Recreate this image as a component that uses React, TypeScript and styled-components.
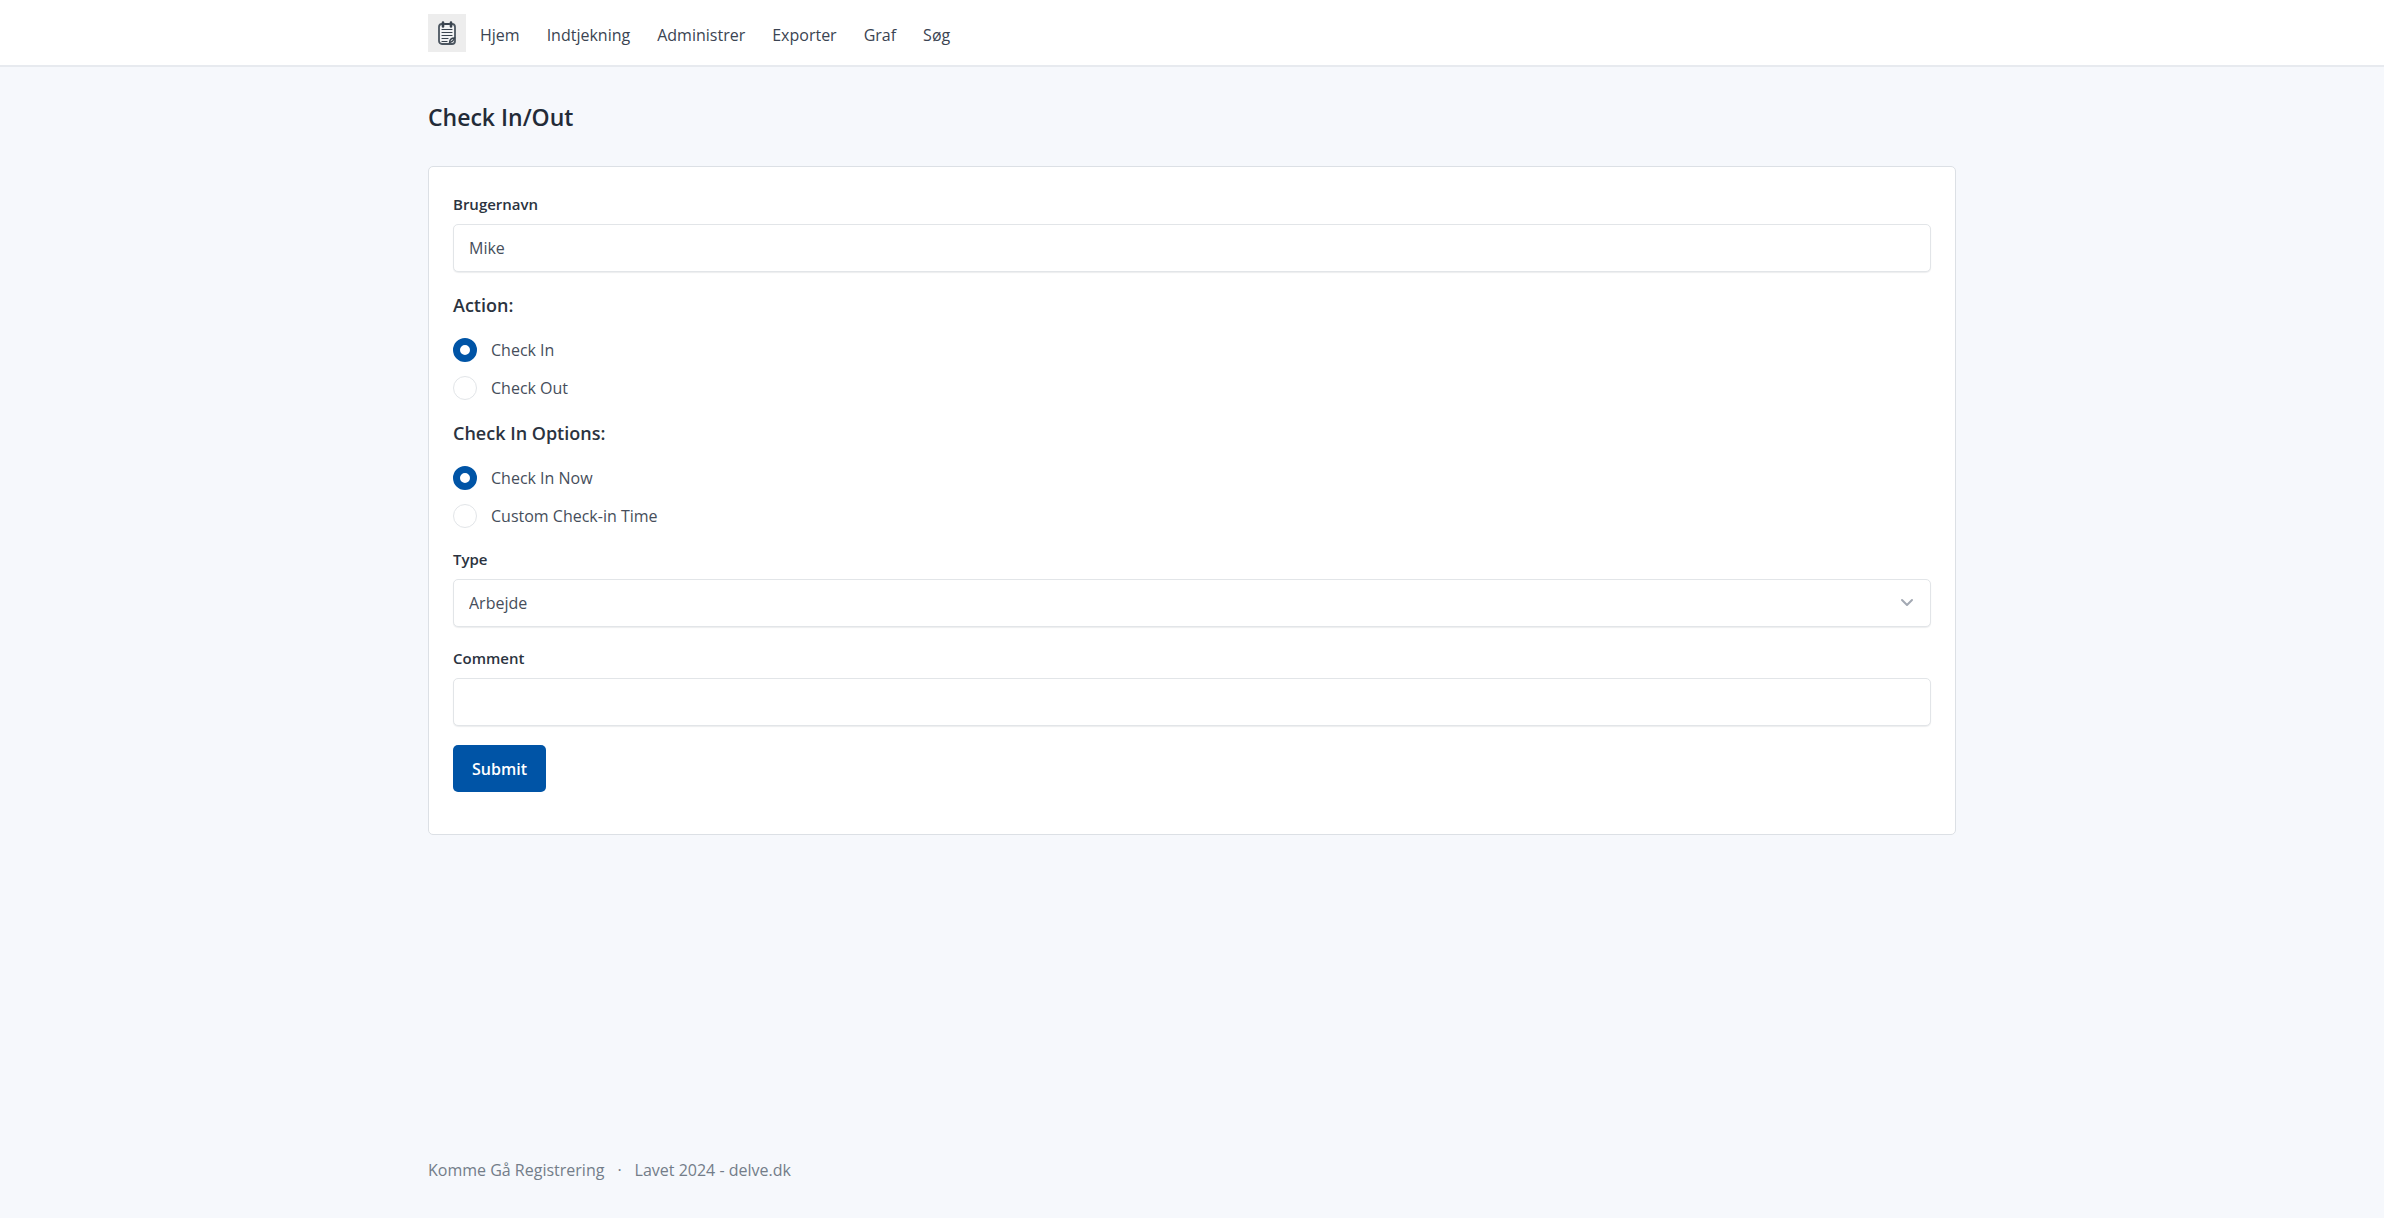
import React, { useState } from "react";
import styled, { createGlobalStyle, css } from "styled-components";

const GlobalStyle = createGlobalStyle`
  *, *::before, *::after { box-sizing: border-box; }
  body {
    margin: 0;
    background: #f6f8fc;
    color: #232b38;
    font-family: "Open Sans", "Noto Sans", sans-serif;
    font-size: 16px;
    line-height: 24px;
  }
`;

const Page = styled.div`
  display: flex;
  flex-direction: column;
  min-height: 100vh;
`;

const Container = styled.div`
  width: 100%;
  max-width: 1576px;
  margin: 0 auto;
  padding: 0 24px;
`;

const Header = styled.header`
  background: #fff;
  border-bottom: 2px solid #e7eaef;
`;

const Navbar = styled(Container)`
  display: flex;
  align-items: center;
  gap: 14px;
  padding-top: 14px;
  padding-bottom: 13px;
`;

const Brand = styled.a`
  display: grid;
  place-items: center;
  width: 38px;
  height: 38px;
  background: #ededed;
`;

const NavLinks = styled.nav`
  display: flex;
  flex-wrap: wrap;
  gap: 27px;
  padding-top: 3px;
`;

const NavLink = styled.a`
  color: #3b4452;
  text-decoration: none;
`;

const Main = styled.main`
  flex: 1;
`;

const Title = styled.h1`
  margin: 0;
  padding: 34px 0 33px;
  font-size: 23px;
  font-weight: 600;
  line-height: 32px;
  color: #232b38;
`;

const Card = styled.form`
  display: flex;
  flex-direction: column;
  padding: 25px 24px 42px;
  background: #fff;
  border: 1px solid #dce0e5;
  border-radius: 5px;
`;

const Field = styled.div`
  display: flex;
  flex-direction: column;
  gap: 8px;
  margin-bottom: 19px;
`;

const Label = styled.label`
  font-size: 15px;
  font-weight: 600;
  color: #2b3340;
`;

const control = css`
  width: 100%;
  height: 48px;
  padding: 0 15px;
  border: 1px solid #e2e5e8;
  border-radius: 5px;
  background: #fff;
  box-shadow: 0 1px 1px rgba(24, 36, 51, 0.08);
  color: #464e5b;
  font: inherit;
`;

const TextInput = styled.input`
  ${control}
`;

const SelectWrap = styled.div`
  display: grid;
  align-items: center;

  > * {
    grid-area: 1 / 1;
  }

  svg {
    justify-self: end;
    margin-right: 16px;
    pointer-events: none;
  }
`;

const Select = styled.select`
  ${control}
  appearance: none;
`;

const Options = styled.fieldset`
  display: flex;
  flex-direction: column;
  gap: 14px;
  min-width: 0;
  margin: 0 0 19px;
  padding: 0;
  border: 0;
`;

const Legend = styled.legend`
  margin-bottom: 19px;
  padding: 0;
  font-size: 18px;
  font-weight: 600;
  line-height: 28px;
  color: #2b3340;
`;

const Choice = styled.label`
  display: flex;
  align-items: center;
  gap: 14px;
  color: #464e5b;
`;

const Radio = styled.input`
  appearance: none;
  width: 24px;
  height: 24px;
  margin: 0;
  border: 1px solid #e2e5e8;
  border-radius: 50%;
  background: #fff;

  &:checked {
    border: 7px solid #0054a6;
  }
`;

const SubmitButton = styled.button`
  align-self: flex-start;
  height: 47px;
  padding: 0 19px;
  border: 0;
  border-radius: 5px;
  background: #0054a6;
  color: #fff;
  font: inherit;
  font-weight: 600;
`;

const Footer = styled.footer`
  padding: 36px 0;
  color: #737d89;
`;

const FooterRow = styled(Container)`
  display: flex;
  gap: 13px;
`;

function NotepadIcon() {
  return (
    <svg width="20" height="26" viewBox="0 0 20 26" fill="none" stroke="#39434e" strokeLinecap="round">
      <rect x="2" y="4" width="16" height="20" rx="3" strokeWidth="1.8" stroke="#4c5660" fill="#f1f2f3" />
      <path d="M6 2.500v4M14 2.500v4" strokeWidth="2.600" />
      <path d="M8.500 4h3" strokeWidth="2" />
      <path d="M5 9.500h10M5 12.500h10M5 15.500h10M5 18.500h6M5 21.500h5" strokeWidth="1.200" />
      <path d="M12.500 22.500c.2-3 1.500-4.500 5-4.500-.8 2.500-2.500 4-5 4.500Z" fill="#dfe2e4" strokeWidth="1.300" />
    </svg>
  );
}

function Chevron() {
  return (
    <svg width="16" height="16" viewBox="0 0 16 16" fill="none" stroke="#a3a9b3" strokeWidth="2" strokeLinecap="round" strokeLinejoin="round">
      <path d="M3 5l5 5 5-5" />
    </svg>
  );
}

const links = ["Hjem", "Indtjekning", "Administrer", "Exporter", "Graf", "Søg"];

type RadioGroupProps = {
  title: string;
  name: string;
  choices: string[];
};

function RadioGroup({ title, name, choices }: RadioGroupProps) {
  const [selected, setSelected] = useState(choices[0]);
  return (
    <Options>
      <Legend>{title}</Legend>
      {choices.map((choice) => (
        <Choice key={choice}>
          <Radio
            type="radio"
            name={name}
            value={choice}
            checked={selected === choice}
            onChange={() => setSelected(choice)}
          />
          {choice}
        </Choice>
      ))}
    </Options>
  );
}

export default function App() {
  return (
    <Page>
      <GlobalStyle />
      <Header>
        <Navbar>
          <Brand href="#">
            <NotepadIcon />
          </Brand>
          <NavLinks>
            {links.map((link) => (
              <NavLink key={link} href="#">
                {link}
              </NavLink>
            ))}
          </NavLinks>
        </Navbar>
      </Header>
      <Main>
        <Container>
          <Title>Check In/Out</Title>
          <Card onSubmit={(event) => event.preventDefault()}>
            <Field>
              <Label htmlFor="username">Brugernavn</Label>
              <TextInput id="username" defaultValue="Mike" />
            </Field>
            <RadioGroup title="Action:" name="action" choices={["Check In", "Check Out"]} />
            <RadioGroup
              title="Check In Options:"
              name="option"
              choices={["Check In Now", "Custom Check-in Time"]}
            />
            <Field>
              <Label htmlFor="type">Type</Label>
              <SelectWrap>
                <Select id="type">
                  <option>Arbejde</option>
                </Select>
                <Chevron />
              </SelectWrap>
            </Field>
            <Field>
              <Label htmlFor="comment">Comment</Label>
              <TextInput id="comment" />
            </Field>
            <SubmitButton type="submit">Submit</SubmitButton>
          </Card>
        </Container>
      </Main>
      <Footer>
        <FooterRow>
          <span>Komme Gå Registrering</span>
          <span>·</span>
          <span>Lavet 2024 - delve.dk</span>
        </FooterRow>
      </Footer>
    </Page>
  );
}
